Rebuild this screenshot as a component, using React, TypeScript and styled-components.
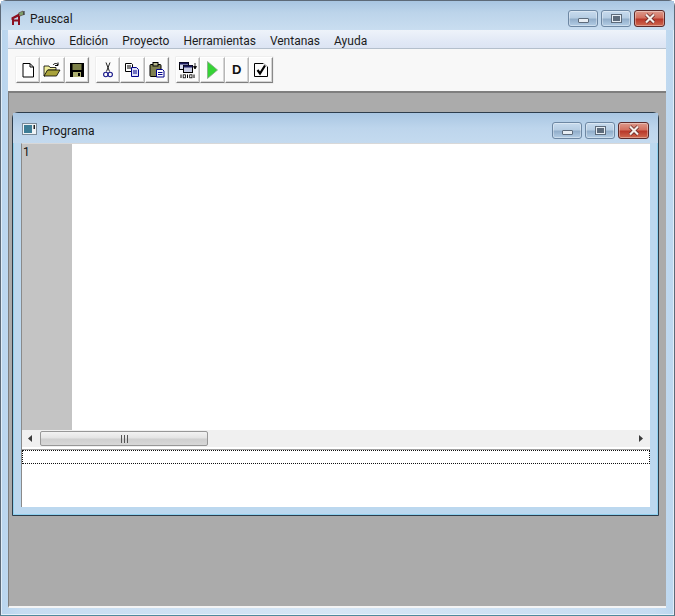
import React from "react";
import styled, { createGlobalStyle } from "styled-components";

const Global = createGlobalStyle`
  html, body { margin: 0; padding: 0; width: 675px; height: 616px; overflow: hidden; background: #fff; }
  #root { width: 675px; height: 616px; }
`;

const Frame = styled.div`
  box-sizing: border-box;
  width: 675px;
  height: 616px;
  display: flex;
  flex-direction: column;
  border: 1px solid #5d6a78;
  border-bottom-color: #4f8a9c;
  border-radius: 6px 6px 0 0;
  background: linear-gradient(90deg, #b9d5ee 0, #c6dcf1 3%, #d6e6f5 50%, #c6dcf1 97%, #bcd7ef 100%);
  box-shadow: inset 0 0 0 1px rgba(255, 255, 255, 0.55);
`;

const TitleBar = styled.div<{ $child?: boolean }>`
  flex: none;
  height: ${(p) => (p.$child ? 30 : 29)}px;
  display: flex;
  align-items: flex-start;
  padding: 0 9px;
  background: ${(p) =>
    p.$child
      ? "linear-gradient(180deg, #a9c6e2 0, #bdd5ec 50%, #c4daef 100%)"
      : "linear-gradient(180deg, #a8c5e1 0, #bcd4ea 40%, #c9ddf0 100%)"};
`;

const TitleIcon = styled.svg`
  flex: none;
  width: 16px;
  height: 16px;
  margin-top: 9px;
`;

const TitleText = styled.span`
  font: 12px/16px Roboto, "Open Sans", sans-serif;
  color: #1a1a1a;
  margin-left: 4px;
  margin-top: 10px;
  flex: 1;
`;

const CaptionButtons = styled.div`
  display: flex;
  gap: 3px;
  margin-top: 9px;
`;

const CaptionButton = styled.div<{ $close?: boolean }>`
  box-sizing: border-box;
  width: ${(p) => (p.$close ? 31 : 30)}px;
  height: 17px;
  border: 1px solid ${(p) => (p.$close ? "#5c2a2a" : "#6d87a3")};
  border-radius: 3px;
  display: flex;
  align-items: center;
  justify-content: center;
  box-shadow: inset 0 0 0 1px rgba(255, 255, 255, 0.35);
  background: ${(p) =>
    p.$close
      ? "linear-gradient(180deg, #dc9a8c 0, #d3705f 45%, #b8382a 55%, #d06a50 100%)"
      : "linear-gradient(180deg, #c8dbee 0, #b6cde3 45%, #92aeca 55%, #b4cee6 100%)"};
`;

const MinGlyph = styled.div`
  box-sizing: border-box;
  width: 11px;
  height: 5px;
  margin-top: 4px;
  background: #e8eef4;
  border: 1px solid #5d6b7b;
  border-radius: 1px;
`;

const MaxGlyph = styled.div`
  box-sizing: border-box;
  width: 9px;
  height: 7px;
  background: #5d6b7b;
  border: 1px solid #e6edf4;
  box-shadow: 0 0 0 1px #5d6b7b;
`;

const CloseGlyph = styled.svg`
  width: 14px;
  height: 11px;
`;

const Client = styled.div`
  flex: 1;
  min-height: 0;
  display: flex;
  flex-direction: column;
  margin: 0 8px 7px 7px;
  background: #fff;
`;

const MenuBar = styled.div`
  flex: none;
  height: 19px;
  box-sizing: border-box;
  display: flex;
  align-items: center;
  padding: 3px 0 0 7px;
  gap: 14px;
  background: linear-gradient(180deg, #eef3fa 0, #e2e9f6 60%, #dce4f3 100%);
  border-bottom: 1px solid #b4bfcc;
`;

const MenuItem = styled.span`
  font: 12px/16px Roboto, "Open Sans", sans-serif;
  color: #1c1c1c;
`;

const ToolBar = styled.div`
  flex: none;
  height: 42px;
  box-sizing: border-box;
  display: flex;
  gap: 7px;
  padding: 8px 0 0 8px;
  background: #f8f8f8;
`;

const ToolGroup = styled.div`
  display: flex;
  height: 26px;
`;

const ToolButton = styled.div`
  box-sizing: border-box;
  width: 24.33px;
  height: 26px;
  display: flex;
  align-items: center;
  justify-content: center;
  background: #fbfbfb;
  border-top: 1px solid #ffffff;
  border-left: 1px solid #ffffff;
  border-right: 1px solid #8a8a8a;
  border-bottom: 1px solid #7d7d7d;
  box-shadow: inset -1px -1px 0 #d4d4d4, 0 0 0 0.5px #e4e4e4;
`;

const ToolIcon = styled.svg`
  width: 18px;
  height: 18px;
`;

const DLabel = styled.span`
  font: bold 13px/16px "Liberation Sans", sans-serif;
  color: #111;
`;

const MdiArea = styled.div`
  flex: 1;
  min-height: 0;
  box-sizing: border-box;
  background: #ababab;
  border-top: 2px solid #7e7e7e;
  border-left: 1px solid #7e7e7e;
  border-bottom: 2px solid #f4f4f4;
  padding: 19px 7px 0 3px;
`;

const ChildWindow = styled.div`
  box-sizing: border-box;
  height: 404px;
  display: flex;
  flex-direction: column;
  border: 1px solid #2e3d4b;
  border-radius: 6px 6px 0 0;
  background: #bcd8ef;
  box-shadow: inset 0 0 0 1px #8fd0ee;
`;

const ChildBody = styled.div`
  flex: 1;
  min-height: 0;
  display: flex;
  flex-direction: column;
  margin: 0 8px 8px 8px;
  background: #fff;
  border-left: 1px solid #8a8a8a;
  border-top: 1px solid #d8d8d8;
`;

const Editor = styled.div`
  flex: none;
  height: 286px;
  display: flex;
  background: #fff;
`;

const Gutter = styled.div`
  width: 50px;
  box-sizing: border-box;
  background: #c4c4c4;
  padding-left: 1px;
  font: 12px/16px Roboto, "Open Sans", sans-serif;
  color: #111;
`;

const ScrollBar = styled.div`
  flex: none;
  height: 17px;
  display: flex;
  align-items: center;
  background: #f0f0f0;
`;

const ScrollArrow = styled.svg`
  flex: none;
  width: 18px;
  height: 17px;
`;

const ScrollThumb = styled.div`
  box-sizing: border-box;
  width: 168px;
  height: 15px;
  display: flex;
  align-items: center;
  justify-content: center;
  border: 1px solid #979797;
  border-radius: 2px;
  background: linear-gradient(180deg, #f2f2f2 0, #e4e4e4 45%, #cfcfcf 55%, #d8d8d8 100%);
`;

const Grip = styled.svg`
  width: 9px;
  height: 8px;
`;

const ScrollTrack = styled.div`
  flex: 1;
`;

const Output = styled.div`
  flex: 1;
  min-height: 0;
  margin-top: 2px;
  background: #fff;
  border-top: 1px solid #a0a0a0;
`;

const OutputLine = styled.div`
  box-sizing: border-box;
  height: 14px;
  border: 1px dotted #111;
`;

const NewIcon = () => (
  <ToolIcon viewBox="0 0 18 18">
    <path d="M4 2.500h7l3.500 3.500v10H4z" fill="#fff" stroke="#000" />
    <path d="M11 2.500V6h3.500" fill="none" stroke="#000" />
  </ToolIcon>
);
const OpenIcon = () => (
  <ToolIcon viewBox="0 0 18 18">
    <path d="M1 5h5l1 1.500h6V9H5L2 15H1z" fill="#f0ee9a" stroke="#000" strokeWidth="0.8" />
    <path d="M4.500 9H17l-3.500 6H1z" fill="#a8a23a" stroke="#000" strokeWidth="0.8" />
    <path d="M10 4c1.500-2 4-2 5 0M15 1.500V4.500h-3" fill="none" stroke="#000" />
  </ToolIcon>
);
const SaveIcon = () => (
  <ToolIcon viewBox="0 0 18 18">
    <rect x="2" y="2" width="14" height="14" fill="#000" />
    <rect x="4.500" y="3" width="9" height="6" fill="#7c8048" />
    <rect x="5" y="11" width="8" height="5" fill="#aeb070" />
    <rect x="10" y="12" width="2" height="3" fill="#000" />
  </ToolIcon>
);
const CutIcon = () => (
  <ToolIcon viewBox="0 0 18 18">
    <path d="M7 1.500 10.500 10.500M11 1.500 7.500 10.500" fill="none" stroke="#222" strokeWidth="1" />
    <circle cx="6.800" cy="13.500" r="2.200" fill="none" stroke="#1a1a8c" strokeWidth="1.100" />
    <circle cx="11.200" cy="13.500" r="2.200" fill="none" stroke="#1a1a8c" strokeWidth="1.100" />
  </ToolIcon>
);
const CopyIcon = () => (
  <ToolIcon viewBox="0 0 18 18">
    <path d="M2.500 2.500h6l1 1v7h-7z" fill="#fff" stroke="#000" />
    <path d="M4 5h4M4 7h4" stroke="#000" />
    <path d="M8.500 6.500h5l2 2v7h-7z" fill="#dfe0f5" stroke="#00008a" />
    <path d="M10 10h4M10 12h4" stroke="#00008a" />
  </ToolIcon>
);
const PasteIcon = () => (
  <ToolIcon viewBox="0 0 18 18">
    <rect x="2" y="3.500" width="11" height="12" rx="1" fill="#7f8050" stroke="#000" />
    <rect x="5" y="1.500" width="5" height="3.500" fill="#b8b88c" stroke="#000" />
    <path d="M8.500 8.500h6l1.500 1.500v6H8.500z" fill="#fff" stroke="#00008a" />
    <path d="M10 11.500h4.500M10 13.500h4.500" stroke="#00008a" />
  </ToolIcon>
);
const CompileIcon = () => (
  <ToolIcon viewBox="0 0 20 18" style={{ width: 20 }}>
    <rect x="1.500" y="1.500" width="9" height="7" fill="#d8dcf0" stroke="#000" />
    <rect x="1.500" y="1.500" width="9" height="2" fill="#1a1a5c" />
    <rect x="5.500" y="4.500" width="9" height="7" fill="#c8cce4" stroke="#000" />
    <rect x="5.500" y="4.500" width="9" height="2" fill="#1a1a5c" />
    <path d="M17 2v5M15.500 5.500 17 8l1.500-2.500z" fill="#000" stroke="#000" strokeWidth="0.8" />
    <path d="M3 13.500v3.500M9.500 13.500v3.500M16 13.500v3.500" stroke="#000" />
    <rect x="5.200" y="13.800" width="2.300" height="3" fill="none" stroke="#000" strokeWidth="0.8" />
    <rect x="11.700" y="13.800" width="2.300" height="3" fill="none" stroke="#000" strokeWidth="0.8" />
  </ToolIcon>
);
const RunIcon = () => (
  <ToolIcon viewBox="0 0 18 18">
    <path d="M4.500 0.500 14.500 9 4.500 17.500z" fill="#35d335" stroke="#86a886" strokeWidth="0.8" />
  </ToolIcon>
);
const CheckIcon = () => (
  <ToolIcon viewBox="0 0 18 18">
    <path d="M2.500 2.500h9M2.500 2.500v13h13v-10" fill="none" stroke="#000" />
    <path d="M11.500 2.500l4 3" fill="none" stroke="#a0a0a0" />
    <path d="M5.500 9l2.500 3.500 5-8" fill="none" stroke="#000" strokeWidth="2.200" />
  </ToolIcon>
);

const Caption = () => (
  <>
    <CaptionButton>
      <MinGlyph />
    </CaptionButton>
    <CaptionButton>
      <MaxGlyph />
    </CaptionButton>
    <CaptionButton $close>
      <CloseGlyph viewBox="0 0 14 11">
        <path d="M3 1.500l8 8M11 1.500l-8 8" stroke="#5c2020" strokeWidth="3.600" />
        <path d="M3 1.500l8 8M11 1.500l-8 8" stroke="#f6efea" strokeWidth="2.200" />
      </CloseGlyph>
    </CaptionButton>
  </>
);

const menus = ["Archivo", "Edición", "Proyecto", "Herramientas", "Ventanas", "Ayuda"];

export default function App() {
  return (
    <>
      <Global />
      <Frame>
        <TitleBar>
          <TitleIcon viewBox="0 0 16 16">
            <path d="M1.500 7.500 9 3.500l.5 2.500-8 4z" fill="#8c1020" />
            <path d="M3 9v6M9 6v9M3 10.500h6" fill="none" stroke="#8c1020" strokeWidth="2" />
            <path d="M8.500 3 13 1l1 3.500-4 1.500z" fill="#7d9f6a" stroke="#5a3a3a" strokeWidth="0.6" />
            <path d="M14 1v4" stroke="#222" />
          </TitleIcon>
          <TitleText>Pauscal</TitleText>
          <CaptionButtons>
            <Caption />
          </CaptionButtons>
        </TitleBar>
        <Client>
          <MenuBar>
            {menus.map((m) => (
              <MenuItem key={m}>{m}</MenuItem>
            ))}
          </MenuBar>
          <ToolBar>
            <ToolGroup>
              <ToolButton><NewIcon /></ToolButton>
              <ToolButton><OpenIcon /></ToolButton>
              <ToolButton><SaveIcon /></ToolButton>
            </ToolGroup>
            <ToolGroup>
              <ToolButton><CutIcon /></ToolButton>
              <ToolButton><CopyIcon /></ToolButton>
              <ToolButton><PasteIcon /></ToolButton>
            </ToolGroup>
            <ToolGroup>
              <ToolButton><CompileIcon /></ToolButton>
              <ToolButton><RunIcon /></ToolButton>
              <ToolButton><DLabel>D</DLabel></ToolButton>
              <ToolButton><CheckIcon /></ToolButton>
            </ToolGroup>
          </ToolBar>
          <MdiArea>
            <ChildWindow>
              <TitleBar $child>
                <TitleIcon viewBox="0 0 16 16">
                  <rect x="0.500" y="1.500" width="14" height="11" fill="#eef3f6" stroke="#7a8a98" />
                  <rect x="2" y="3" width="8" height="8" fill="#3d7d96" />
                  <rect x="11.500" y="3" width="1.500" height="4" fill="#222" />
                </TitleIcon>
                <TitleText>Programa</TitleText>
                <CaptionButtons>
                  <Caption />
                </CaptionButtons>
              </TitleBar>
              <ChildBody>
                <Editor>
                  <Gutter>1</Gutter>
                </Editor>
                <ScrollBar>
                  <ScrollArrow viewBox="0 0 18 17">
                    <path d="M6 8.500 10 5v7z" fill="#3c3c3c" />
                  </ScrollArrow>
                  <ScrollThumb>
                    <Grip viewBox="0 0 9 8">
                      <path d="M1.500 0v8M4.500 0v8M7.500 0v8" stroke="#555" />
                    </Grip>
                  </ScrollThumb>
                  <ScrollTrack />
                  <ScrollArrow viewBox="0 0 18 17">
                    <path d="M11 8.500 7 5v7z" fill="#3c3c3c" />
                  </ScrollArrow>
                </ScrollBar>
                <Output>
                  <OutputLine />
                </Output>
              </ChildBody>
            </ChildWindow>
          </MdiArea>
        </Client>
      </Frame>
    </>
  );
}
